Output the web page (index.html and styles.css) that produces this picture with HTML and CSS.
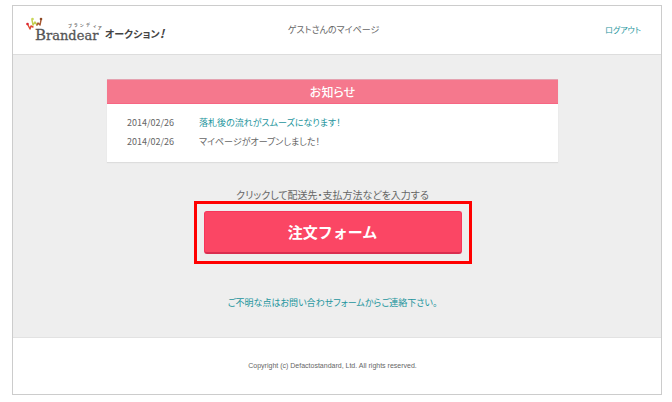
FILE: index.html
```html
<!DOCTYPE html>
<html lang="ja">
<head>
<meta charset="utf-8">
<meta name="viewport" content="width=device-width, initial-scale=1">
<title>Brandear オークション！ マイページ</title>
<link rel="stylesheet" href="styles.css">
</head>
<body>
<div class="page">
  <header class="header">
    <a class="logo" href="#">
      <svg class="logo-mark" viewBox="0 0 144 28" role="img" aria-label="Brandear オークション！">
        <g fill="none" stroke-linecap="round" stroke-linejoin="round" stroke-width="1.4">
          <path d="M2 9 L4 13 L5 10 L7 11" stroke="#e0492f"/>
          <path d="M6 4 L7 9 L9 6 L11 9" stroke="#c3cf52"/>
          <path d="M15 4 L14 9 L12 7 L11 9" stroke="#a5562f"/>
        </g>
        <circle cx="1.5" cy="8" r="1.3" fill="#dc2430"/>
        <circle cx="6.500" cy="3" r="1.300" fill="#c9d757"/>
        <circle cx="15" cy="3" r="1.300" fill="#8f4a25"/>
        <text class="logo-name" x="9" y="24"><tspan class="logo-initial">B</tspan>randear</text>
        <g class="logo-kana">
          <text x="42" y="12">ブ</text>
          <text x="48" y="11">ラ</text>
          <text x="54" y="11">ン</text>
          <text x="60" y="11">デ</text>
          <text x="67" y="12">ィ</text>
          <text x="72" y="14">ア</text>
        </g>
        <text class="logo-sub" x="79" y="22">オークション<tspan class="logo-bang">!</tspan></text>
      </svg>
    </a>
    <p class="title">ゲストさんのマイページ</p>
    <a class="logout" href="#">ログアウト</a>
  </header>
  <main class="main">
    <section class="news">
      <h2 class="news-title">お知らせ</h2>
      <dl class="news-list">
        <dt>2014/02/26</dt>
        <dd><a href="#">落札後の流れがスムーズになります！</a></dd>
        <dt>2014/02/26</dt>
        <dd>マイページがオープンしました！</dd>
      </dl>
    </section>
    <p class="lead">クリックして配送先・支払方法などを入力する</p>
    <div class="highlight">
      <button class="order" type="button">注文フォーム</button>
    </div>
    <a class="contact" href="#">ご不明な点はお問い合わせフォームからご連絡下さい。</a>
  </main>
  <footer class="footer">Copyright (c) Defactostandard, Ltd. All rights reserved.</footer>
</div>
</body>
</html>
```
FILE: styles.css
```css
* {
  box-sizing: border-box;
}

body {
  margin: 0;
  padding: 5px 10px 7px 12px;
  background: #fff;
  color: #666;
  font-family: "Noto Sans CJK JP", sans-serif;
  font-size: 9px;
  font-weight: 400;
  font-feature-settings: "palt";
  line-height: 18px;
}

p,
h2,
dl,
dd {
  margin: 0;
}

a {
  color: #1d959d;
  text-decoration: none;
}

.page {
  border: 1px solid #ccc;
}

.header {
  display: grid;
  grid-template-columns: 1fr auto 1fr;
  align-items: center;
  height: 49px;
  padding: 0 20px 0 13px;
  border-bottom: 1px solid #ddd;
}

.logo-mark {
  display: block;
  width: 144px;
  height: 28px;
}

.logo-name {
  fill: #555;
  stroke: #555;
  stroke-width: 0.3px;
  font-family: "DejaVu Serif", serif;
  font-size: 13px;
}

.logo-initial {
  font-size: 15px;
}

.logo-kana {
  fill: #666;
  font-size: 4px;
  font-weight: 700;
}

.logo-sub {
  fill: #444;
  font-size: 10px;
  font-weight: 700;
}

.logo-bang {
  font-size: 12px;
  font-style: italic;
}

.logout {
  justify-self: end;
  font-size: 8px;
}

.main {
  display: flex;
  flex-direction: column;
  align-items: center;
  padding: 24px 29px 25px 20px;
  background: #eee;
  border-bottom: 1px solid #e2e2e2;
}

.news {
  width: 100%;
  max-width: 451px;
  background: #fff;
  box-shadow: 0 1px 1px #ddd;
}

.news-title {
  background: #f5788d;
  border-top: 1px solid #e4a2b0;
  border-bottom: 1px solid #f76683;
  color: #fff;
  font-size: 12px;
  font-weight: 500;
  line-height: 23px;
  text-align: center;
}

.news-list {
  display: grid;
  grid-template-columns: auto 1fr;
  column-gap: 25px;
  row-gap: 1px;
  padding: 10px 20px 11px;
}

.lead {
  margin-top: 27px;
  font-size: 10px;
  line-height: 12px;
}

.highlight {
  width: 100%;
  max-width: 278px;
  padding: 7px;
  border: 3px solid #f00;
}

.order {
  display: block;
  width: 100%;
  height: 43px;
  padding: 0;
  border: 1px solid #f6365a;
  border-bottom: 2px solid #d92e50;
  border-radius: 3px;
  background: #fb4664;
  color: #fff;
  font-family: inherit;
  font-size: 15px;
  font-weight: 700;
  line-height: 38px;
}

.contact {
  margin-top: 30px;
}

.footer {
  padding: 19px 29px 19px 20px;
  font-family: "Liberation Sans", sans-serif;
  font-size: 7px;
  text-align: center;
}
```
